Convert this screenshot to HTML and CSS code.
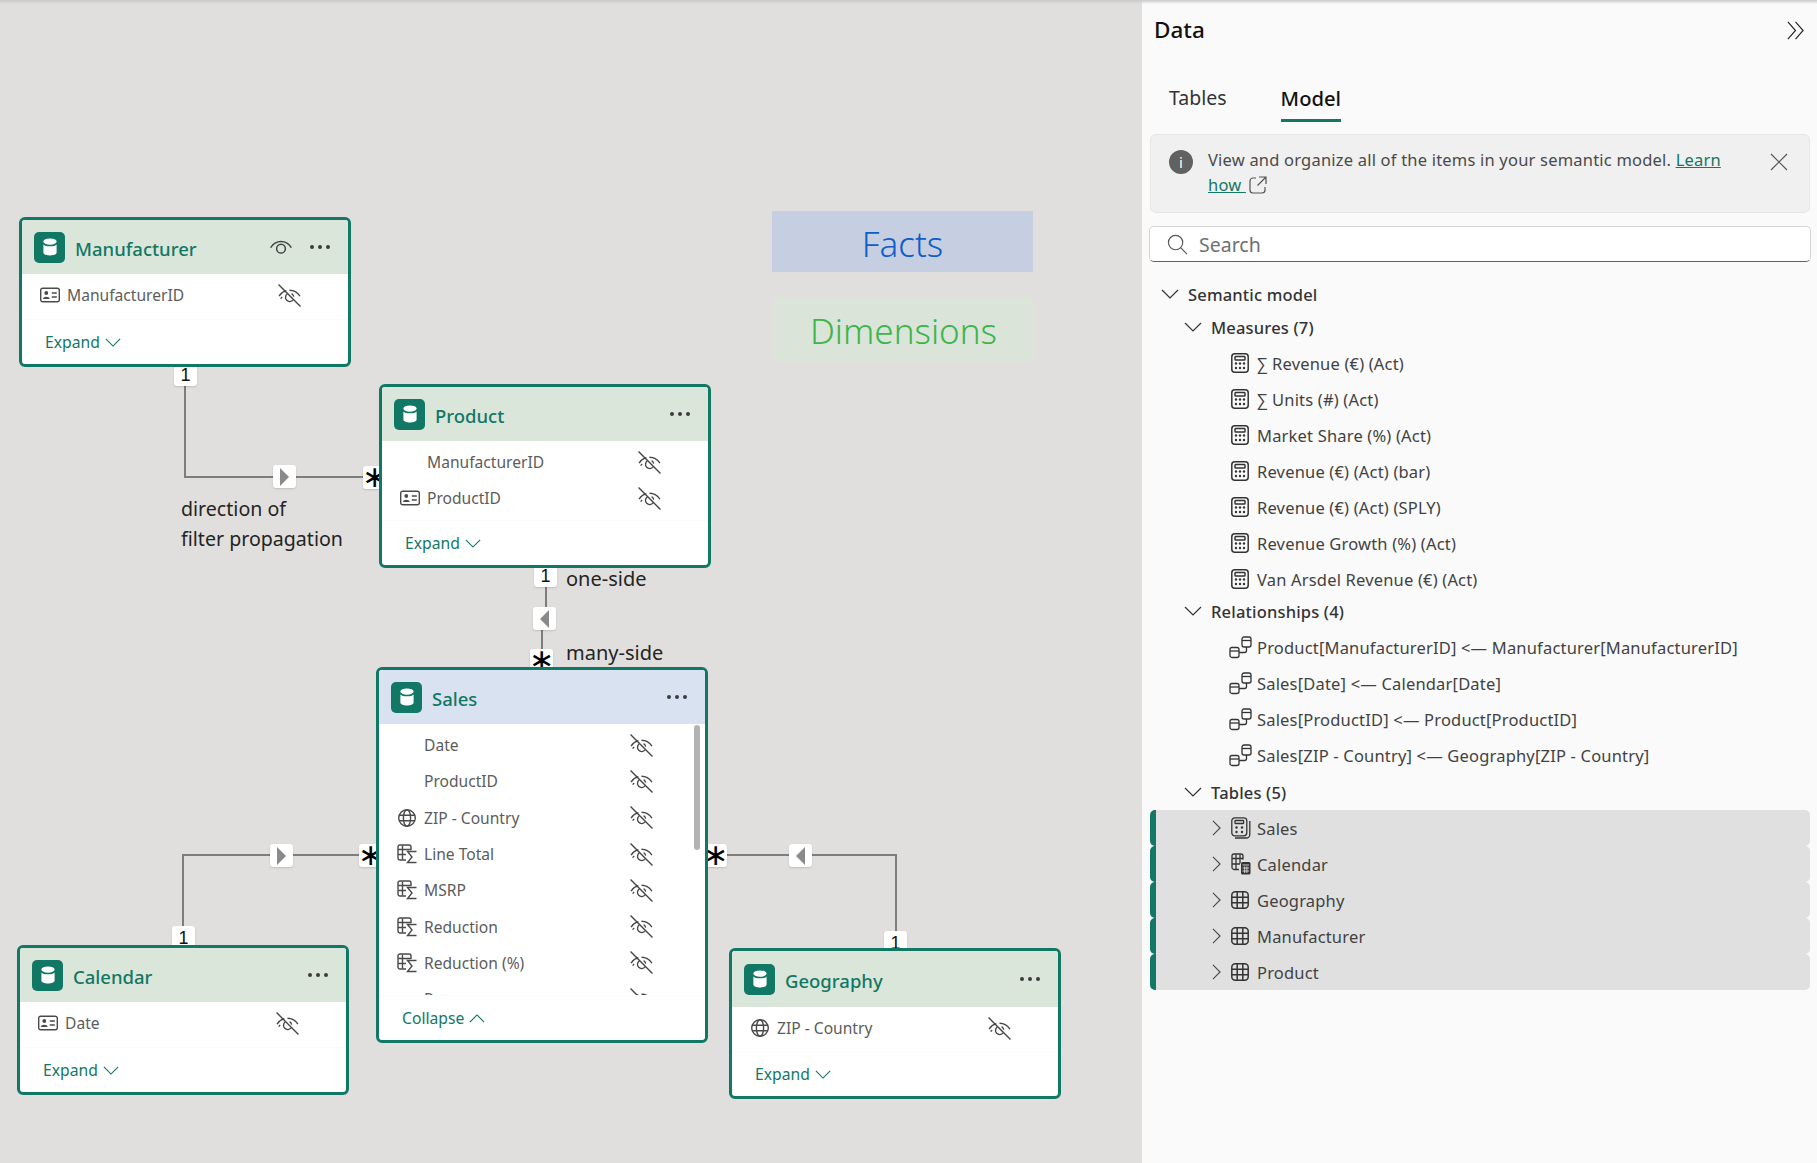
FILE: index.html
```html
<!DOCTYPE html>
<html>
<head>
  <title>Model view</title>
  <meta charset="utf-8">
  <link rel="stylesheet" href="styles.css">
</head>
<body>
  <svg class="defs" width="0" height="0">
    <symbol id="i-db" viewBox="0 0 20 20">
      <ellipse cx="10" cy="4.6" rx="6.6" ry="3.2" fill="#fff" stroke="none"/>
      <path d="M3.4 7.4c1.6 2.6 11.6 2.6 13.2 0v8c0 4-13.2 4-13.2 0z" fill="#fff" stroke="none"/>
    </symbol>
    <symbol id="i-eye" viewBox="0 0 22 22">
      <path d="M1.5 11.5C6 4 16 4 20.5 11.5"/>
      <circle cx="11" cy="12.5" r="4"/>
    </symbol>
    <symbol id="i-eyeoff" viewBox="0 0 22 22">
      <path d="M1 11.5C3 8.6 5.6 7 8 6.4M11 6c4 0 7.5 2 10 5.5M2.5 14l1.5-1.5"/>
      <path d="M8.8 9.6a4 4 0 1 0 5.6 5.6M13 9.2a4 4 0 0 1 2 2.8"/>
      <path d="M0.5 0.5L21.5 21.5"/>
    </symbol>
    <symbol id="i-card" viewBox="0 0 20 16">
      <rect x="0.7" y="1.2" width="18.6" height="13.6" rx="2"/>
      <circle cx="6.3" cy="6" r="1.9" fill="currentColor" stroke="none"/>
      <path d="M3 12c0-3 6.6-3 6.6 0z" fill="currentColor" stroke="none"/>
      <path d="M11.8 6h5M11.8 10h5"/>
    </symbol>
    <symbol id="i-globe" viewBox="0 0 20 20">
      <circle cx="10" cy="10" r="8.3"/>
      <ellipse cx="10" cy="10" rx="3.6" ry="8.3"/>
      <path d="M2 7.2h16M2 12.8h16"/>
    </symbol>
    <symbol id="i-sumcol" viewBox="0 0 20 20">
      <path d="M9 16H3a2 2 0 0 1-2-2V3a2 2 0 0 1 2-2h9a2 2 0 0 1 2 2v3"/>
      <path d="M1 5.5h13M1 10.5h8M5.5 1.5v14"/>
      <path d="M19.5 7.5h-9l4.5 5.5-4.5 5.5h9"/>
    </symbol>
    <symbol id="i-calc" viewBox="0 0 18 20">
      <rect x="0.8" y="0.8" width="16.4" height="18.4" rx="3"/>
      <rect x="4" y="3.5" width="10" height="3.5" rx="0.8"/>
      <g fill="currentColor" stroke="none">
        <circle cx="5" cy="10.5" r="1.2"/><circle cx="9" cy="10.5" r="1.2"/><circle cx="13" cy="10.5" r="1.2"/>
        <circle cx="5" cy="15" r="1.2"/><circle cx="9" cy="15" r="1.2"/><circle cx="13" cy="15" r="1.2"/>
      </g>
    </symbol>
    <symbol id="i-calcstack" viewBox="0 0 20 22">
      <rect x="0.8" y="0.8" width="15" height="18" rx="3"/>
      <rect x="4" y="3.5" width="8.6" height="3" rx="0.6"/>
      <g fill="currentColor" stroke="none">
        <circle cx="5.5" cy="10.5" r="1.2"/><circle cx="11" cy="10.5" r="1.2"/>
        <circle cx="5.5" cy="15" r="1.2"/><circle cx="11" cy="15" r="1.2"/>
      </g>
      <path d="M18.8 4v13.5a3.5 3.5 0 0 1-3.5 3.5H4"/>
    </symbol>
    <symbol id="i-rel" viewBox="0 0 23 23">
      <rect x="1" y="11.5" width="9" height="10" rx="2"/>
      <path d="M1 15h9"/>
      <rect x="13" y="1" width="9" height="10" rx="2"/>
      <path d="M13 4.5h9"/>
      <path d="M17.5 11v3.5a2 2 0 0 1-2 2H10"/>
    </symbol>
    <symbol id="i-grid" viewBox="0 0 18 18">
      <rect x="0.8" y="0.8" width="16.4" height="16.4" rx="3.5"/>
      <path d="M6.2 1v16M11.8 1v16M1 6.2h16M1 11.8h16"/>
    </symbol>
    <symbol id="i-tablecalc" viewBox="0 0 20 22">
      <path d="M8 16.5H3a2 2 0 0 1-2-2V3a2 2 0 0 1 2-2h7a2 2 0 0 1 2 2v3.500"/>
      <path d="M1 5.5h11M1 11h8M5 1.5v15M9 1.5v9"/>
      <rect x="10" y="9" width="9.500" height="12.500" rx="1.500" fill="currentColor" stroke="none"/>
      <path d="M11.500 12h6.500M11.500 15h6.500M11.500 18h6.500M13.700 13.500v6.500M15.900 13.500v6.500" stroke="#e0e0e0" stroke-width="0.900"/>
    </symbol>
    <symbol id="i-down" viewBox="0 0 18 10"><path d="M1 1l8 8 8-8"/></symbol>
    <symbol id="i-up" viewBox="0 0 18 10"><path d="M1 9l8-8 8 8"/></symbol>
    <symbol id="i-right" viewBox="0 0 10 18"><path d="M1 1l8 8-8 8"/></symbol>
    <symbol id="i-dbl" viewBox="0 0 20 20"><path d="M2 1l8 9-8 9M10 1l8 9-8 9"/></symbol>
    <symbol id="i-close" viewBox="0 0 18 18"><path d="M1 1l16 16M17 1L1 17"/></symbol>
    <symbol id="i-search" viewBox="0 0 22 22"><circle cx="9" cy="9" r="7.5"/><path d="M14.5 14.5l6.5 6.5"/></symbol>
    <symbol id="i-open" viewBox="0 0 18 18"><path d="M7 2H4a3 3 0 0 0-3 3v9a3 3 0 0 0 3 3h9a3 3 0 0 0 3-3v-3"/><path d="M10 1h7v7M17 1L8.5 9.5"/></symbol>
  </svg>

  <div class="app">
    <main class="canvas">
      <svg class="links" width="1141" height="1163">
        <path d="M185 385V477H379"/>
        <path d="M546 587V610M542 628V650"/>
        <path d="M183 930V855H376"/>
        <path d="M708 855H896V932"/>
      </svg>

      <span class="badge at-mfr-one">1</span>
      <span class="badge at-mfr-dir"><i class="tri-right"></i></span>
      <span class="badge star at-mfr-many">∗</span>
      <span class="badge at-prod-one">1</span>
      <span class="badge at-prod-dir"><i class="tri-left"></i></span>
      <span class="badge star at-prod-many">∗</span>
      <span class="badge at-cal-one">1</span>
      <span class="badge at-cal-dir"><i class="tri-right"></i></span>
      <span class="badge star at-cal-many">∗</span>
      <span class="badge star at-geo-many">∗</span>
      <span class="badge at-geo-dir"><i class="tri-left"></i></span>
      <span class="badge at-geo-one">1</span>

      <p class="note note-direction">direction of<br>filter propagation</p>
      <p class="note note-one">one-side</p>
      <p class="note note-many">many-side</p>

      <div class="legend legend-facts">Facts</div>
      <div class="legend legend-dims">Dimensions</div>

      <section class="card card-manufacturer">
        <header class="card-head">
          <span class="db"><svg><use href="#i-db"/></svg></span>
          <h2>Manufacturer</h2>
          <svg class="head-eye"><use href="#i-eye"/></svg>
          <span class="dots"><i></i><i></i><i></i></span>
        </header>
        <div class="fields">
          <div class="field"><svg class="f-ico f-card"><use href="#i-card"/></svg><span>ManufacturerID</span><svg class="eyeoff"><use href="#i-eyeoff"/></svg></div>
        </div>
        <footer class="card-foot">Expand <svg class="foot-chev"><use href="#i-down"/></svg></footer>
      </section>

      <section class="card card-product">
        <header class="card-head">
          <span class="db"><svg><use href="#i-db"/></svg></span>
          <h2>Product</h2>
          <span class="dots"><i></i><i></i><i></i></span>
        </header>
        <div class="fields">
          <div class="field"><span class="f-ico"></span><span>ManufacturerID</span><svg class="eyeoff"><use href="#i-eyeoff"/></svg></div>
          <div class="field"><svg class="f-ico f-card"><use href="#i-card"/></svg><span>ProductID</span><svg class="eyeoff"><use href="#i-eyeoff"/></svg></div>
        </div>
        <footer class="card-foot">Expand <svg class="foot-chev"><use href="#i-down"/></svg></footer>
      </section>

      <section class="card card-sales">
        <header class="card-head">
          <span class="db"><svg><use href="#i-db"/></svg></span>
          <h2>Sales</h2>
          <span class="dots"><i></i><i></i><i></i></span>
        </header>
        <div class="fields">
          <div class="field"><span class="f-ico"></span><span>Date</span><svg class="eyeoff"><use href="#i-eyeoff"/></svg></div>
          <div class="field"><span class="f-ico"></span><span>ProductID</span><svg class="eyeoff"><use href="#i-eyeoff"/></svg></div>
          <div class="field"><svg class="f-ico"><use href="#i-globe"/></svg><span>ZIP - Country</span><svg class="eyeoff"><use href="#i-eyeoff"/></svg></div>
          <div class="field"><svg class="f-ico"><use href="#i-sumcol"/></svg><span>Line Total</span><svg class="eyeoff"><use href="#i-eyeoff"/></svg></div>
          <div class="field"><svg class="f-ico"><use href="#i-sumcol"/></svg><span>MSRP</span><svg class="eyeoff"><use href="#i-eyeoff"/></svg></div>
          <div class="field"><svg class="f-ico"><use href="#i-sumcol"/></svg><span>Reduction</span><svg class="eyeoff"><use href="#i-eyeoff"/></svg></div>
          <div class="field"><svg class="f-ico"><use href="#i-sumcol"/></svg><span>Reduction (%)</span><svg class="eyeoff"><use href="#i-eyeoff"/></svg></div>
          <div class="field"><span class="f-ico"></span><span>Revenue</span><svg class="eyeoff"><use href="#i-eyeoff"/></svg></div>
        </div>
        <div class="thumb"></div>
        <footer class="card-foot">Collapse <svg class="foot-chev"><use href="#i-up"/></svg></footer>
      </section>

      <section class="card card-calendar">
        <header class="card-head">
          <span class="db"><svg><use href="#i-db"/></svg></span>
          <h2>Calendar</h2>
          <span class="dots"><i></i><i></i><i></i></span>
        </header>
        <div class="fields">
          <div class="field"><svg class="f-ico f-card"><use href="#i-card"/></svg><span>Date</span><svg class="eyeoff"><use href="#i-eyeoff"/></svg></div>
        </div>
        <footer class="card-foot">Expand <svg class="foot-chev"><use href="#i-down"/></svg></footer>
      </section>

      <section class="card card-geography">
        <header class="card-head">
          <span class="db"><svg><use href="#i-db"/></svg></span>
          <h2>Geography</h2>
          <span class="dots"><i></i><i></i><i></i></span>
        </header>
        <div class="fields">
          <div class="field"><svg class="f-ico"><use href="#i-globe"/></svg><span>ZIP - Country</span><svg class="eyeoff"><use href="#i-eyeoff"/></svg></div>
        </div>
        <footer class="card-foot">Expand <svg class="foot-chev"><use href="#i-down"/></svg></footer>
      </section>
    </main>

    <aside class="panel">
      <div class="panel-head">
        <h1>Data</h1>
        <svg class="dbl"><use href="#i-dbl"/></svg>
      </div>
      <nav class="tabs">
        <span class="tab">Tables</span>
        <span class="tab active">Model</span>
      </nav>
      <div class="banner">
        <span class="info">i</span>
        <p>View and organize all of the items in your semantic model. <a>Learn</a> <a>how </a><svg class="open"><use href="#i-open"/></svg></p>
        <svg class="close"><use href="#i-close"/></svg>
      </div>
      <div class="search">
        <svg><use href="#i-search"/></svg>
        <span>Search</span>
      </div>
      <div class="tree">
        <div class="row root"><svg class="chev"><use href="#i-down"/></svg>Semantic model</div>

        <div class="row group"><svg class="chev"><use href="#i-down"/></svg>Measures (7)</div>
        <div class="row item"><svg class="ico"><use href="#i-calc"/></svg>∑ Revenue (€) (Act)</div>
        <div class="row item"><svg class="ico"><use href="#i-calc"/></svg>∑ Units (#) (Act)</div>
        <div class="row item"><svg class="ico"><use href="#i-calc"/></svg>Market Share (%) (Act)</div>
        <div class="row item"><svg class="ico"><use href="#i-calc"/></svg>Revenue (€) (Act) (bar)</div>
        <div class="row item"><svg class="ico"><use href="#i-calc"/></svg>Revenue (€) (Act) (SPLY)</div>
        <div class="row item"><svg class="ico"><use href="#i-calc"/></svg>Revenue Growth (%) (Act)</div>
        <div class="row item"><svg class="ico"><use href="#i-calc"/></svg>Van Arsdel Revenue (€) (Act)</div>

        <div class="row group group-rel"><svg class="chev"><use href="#i-down"/></svg>Relationships (4)</div>
        <div class="row item"><svg class="ico ico-rel"><use href="#i-rel"/></svg>Product[ManufacturerID] &lt;— Manufacturer[ManufacturerID]</div>
        <div class="row item"><svg class="ico ico-rel"><use href="#i-rel"/></svg>Sales[Date] &lt;— Calendar[Date]</div>
        <div class="row item"><svg class="ico ico-rel"><use href="#i-rel"/></svg>Sales[ProductID] &lt;— Product[ProductID]</div>
        <div class="row item"><svg class="ico ico-rel"><use href="#i-rel"/></svg>Sales[ZIP - Country] &lt;— Geography[ZIP - Country]</div>

        <div class="row group group-tables"><svg class="chev"><use href="#i-down"/></svg>Tables (5)</div>
        <div class="row table"><svg class="chev-r"><use href="#i-right"/></svg><svg class="ico ico-big"><use href="#i-calcstack"/></svg>Sales</div>
        <div class="row table"><svg class="chev-r"><use href="#i-right"/></svg><svg class="ico ico-big"><use href="#i-tablecalc"/></svg>Calendar</div>
        <div class="row table"><svg class="chev-r"><use href="#i-right"/></svg><svg class="ico"><use href="#i-grid"/></svg>Geography</div>
        <div class="row table"><svg class="chev-r"><use href="#i-right"/></svg><svg class="ico"><use href="#i-grid"/></svg>Manufacturer</div>
        <div class="row table"><svg class="chev-r"><use href="#i-right"/></svg><svg class="ico"><use href="#i-grid"/></svg>Product</div>
      </div>
    </aside>
  </div>
</body>
</html>
```
FILE: styles.css
```css
* {box-sizing: border-box; font-family: "Noto Sans", "Open Sans", sans-serif;}
html, body {margin: 0; height: 100%; overflow: hidden;}
p, h1, h2 {margin: 0;}
svg {fill: none; stroke: currentColor; stroke-width: 1.2; flex: none; display: block;}
.defs {position: absolute;}

.app {position: relative; display: flex; width: 1817px; height: 1163px;}
.app::before {content: ""; position: absolute; left: 0; right: 0; top: 0; height: 4px; z-index: 9; background: linear-gradient(#c9c9c9, rgba(225,223,221,0));}

.canvas {position: relative; flex: none; width: 1142px; height: 100%; background: #e1dfdd;}
.links {position: absolute; left: 0; top: 0; stroke: #7d7d7d; stroke-width: 2;}

.badge {position: absolute; width: 23px; height: 23px; padding-top: 2px; background: #fff; border-radius: 3px; box-shadow: 0 1px 2px rgba(0,0,0,.15); display: flex; align-items: center; justify-content: center; font: 18px "Liberation Sans", sans-serif; color: #111;}
.star {font: 30px "DejaVu Sans", sans-serif; line-height: 23px; padding: 0 0 2px; color: #000;}
.badge:has(i) {padding-top: 0;}
.tri-right {width: 0; height: 0; border-left: 9px solid #8a8a8a; border-top: 9px solid transparent; border-bottom: 9px solid transparent;}
.tri-left {width: 0; height: 0; border-right: 9px solid #8a8a8a; border-top: 9px solid transparent; border-bottom: 9px solid transparent;}

.at-mfr-one {left: 174px; top: 363px;}
.at-mfr-dir {left: 273px; top: 465px;}
.at-mfr-many {left: 363px; top: 466px;}
.at-prod-one {left: 534px; top: 564px;}
.at-prod-dir {left: 533px; top: 607px;}
.at-prod-many {left: 530px; top: 649px;}
.at-cal-one {left: 172px; top: 926px;}
.at-cal-dir {left: 270px; top: 844px;}
.at-cal-many {left: 359px; top: 844px;}
.at-geo-many {left: 704px; top: 844px;}
.at-geo-dir {left: 789px; top: 844px;}
.at-geo-one {left: 884px; top: 931px;}

.note {position: absolute; font-size: 20px; line-height: 30px; color: #252423;}
.note-direction {left: 181px; top: 494px; font-size: 19.6px;}
.note-one {left: 566px; top: 564px;}
.note-many {left: 566px; top: 638px;}

.legend {position: absolute; width: 261px; padding-top: 3px; display: flex; align-items: center; justify-content: center; font-size: 35px; font-weight: 350;}
.legend-facts {left: 772px; top: 211px; height: 61px; background: #c6cfe1; color: #0f5ccb;}
.legend-dims {left: 773px; top: 298px; height: 64px; padding-top: 1px; background: #dae4d9; color: #3cb54a;}

.card {position: absolute; width: 332px; background: #fff; border: 3px solid #117865; border-radius: 6px; overflow: hidden;}
.card-manufacturer {left: 19px; top: 217px;}
.card-product {left: 379px; top: 384px;}
.card-sales {left: 376px; top: 667px;}
.card-calendar {left: 17px; top: 945px;}
.card-geography {left: 729px; top: 948px;}

.card-head {height: 54px; display: flex; align-items: center; padding-left: 12px; background: #dbe6db;}
.card-sales .card-head {background: #d9e2f1;}
.card-geography .card-head {height: 56px;}
.db {width: 31px; height: 31px; border-radius: 5px; background: #117865; display: flex; align-items: center; justify-content: center;}
.db svg {width: 20px; height: 20px;}
.card-head h2 {flex: 1; margin-left: 10px; padding-top: 2px; font-size: 18.5px; font-weight: 500; color: #117865;}
.head-eye {width: 24px; height: 24px; margin-right: 17px; color: #444; stroke-width: 1.4;}
.dots {display: flex; gap: 4px; margin-right: 18px;}
.dots i {width: 4px; height: 4px; border-radius: 50%; background: #3b3b3b;}

.fields {padding: 3px 0 6px;}
.card-product .fields {padding-bottom: 4px;}
.card-geography .fields {padding-bottom: 5px;}
.card-sales .fields {height: 271px; overflow: hidden; padding-bottom: 0;}
.field {height: 36px; display: grid; grid-template-columns: 27px 211px 24px; align-items: center; padding-left: 18px; font-size: 15.6px; color: #5c5c5c;}
.card-sales .field {height: 36.3px; grid-template-columns: 27px 206px 24px;}
.f-ico {width: 20px; height: 20px; color: #4a4a4a; stroke-width: 1.4;}
.eyeoff {width: 23px; height: 23px; color: #444; stroke-width: 1.3;}
.thumb {position: absolute; right: 5px; top: 55px; width: 6px; height: 125px; border-radius: 3px; background: #b3b3b3;}

.card-foot {height: 45px; display: flex; align-items: center; gap: 5px; padding-left: 23px; font-size: 15.7px; color: #117865; border-top: 1px solid #fbfbfb;}
.foot-chev {width: 16px; height: 9px; stroke-width: 1.3;}

/* right pane */
.panel {flex: none; width: 675px; background: #fafafa; color: #424242;}
.panel-head {height: 60px; display: flex; align-items: center; justify-content: space-between; padding: 0 12px 0 12px;}
.panel-head h1 {font-size: 22.5px; font-weight: 500; color: #111; margin-top: -2px;}
.dbl {width: 19px; height: 19px; color: #222;}

.tabs {height: 62px; padding: 18px 0 0 27px; display: flex; gap: 54px;}
.tab {height: 44px; line-height: 40px; font-size: 19.5px; color: #333;}
.tab.active {font-size: 20.2px; color: #111; font-weight: 500; border-bottom: 3px solid #117865;}

.banner {margin: 12px 7px 0 8px; height: 79px; display: flex; align-items: flex-start; padding: 12px 18px 0 18px; background: #f0f0f0; border: 1px solid #e6e6e6; border-radius: 6px; font-size: 16.5px; letter-spacing: .2px; color: #4a4a4a;}
.info {width: 24px; height: 24px; margin-top: 3px; border-radius: 50%; background: #616161; color: #fff; font-size: 15px; text-align: center; line-height: 24px; flex: none;}
.banner p {width: 530px; margin-left: 15px; line-height: 25px;}
.banner a {color: #117865; text-decoration: underline;}
.open {display: inline-block; vertical-align: -3px; width: 18px; height: 18px; margin-left: 3px; color: #555;}
.close {width: 18px; height: 18px; margin: 6px 0 0 32px; color: #555;}

.search {margin: 13px 6px 0 7px; height: 36px; display: flex; align-items: center; gap: 11px; padding-left: 17px; background: #fff; border: 1px solid #d6d6d6; border-bottom-color: #616161; border-radius: 5px; font-size: 19.5px; color: #707070;}
.search svg {width: 21px; height: 21px; color: #555;}

.tree {margin-top: 15px; font-size: 16.5px; letter-spacing: .18px;}
.row {display: flex; align-items: center;}
.chev {width: 18px; height: 10px; margin-right: 9px; color: #333;}
.root {height: 34px; padding-left: 19px; font-weight: 500; color: #333;}
.group {height: 32px; padding-left: 42px; font-weight: 500; color: #333;}
.group-rel {height: 28px; margin-bottom: 4px;}
.group-tables {height: 34px; margin: 2px 0 1px;}
.item {height: 36px; padding-left: 89px;}
.group + .item {margin-top: 2px;}
.group-rel + .item {margin-top: 0;}
.ico {width: 18px; height: 20px; margin-right: 8px; color: #333; stroke-width: 1.5;}
.ico-rel {width: 23px; height: 23px; margin: 0 5px 0 -2px; stroke-width: 1.3;}
.ico-big {width: 20px; height: 22px; margin-right: 6px; stroke-width: 1.3;}
.table {height: 36px; margin: 0 7px 0 8px; padding-left: 56px; background: #e0e0e0; border-left: 6px solid #117865; border-radius: 5px;}
.chev-r {width: 9px; height: 16px; margin-right: 10px; color: #444;}
```
